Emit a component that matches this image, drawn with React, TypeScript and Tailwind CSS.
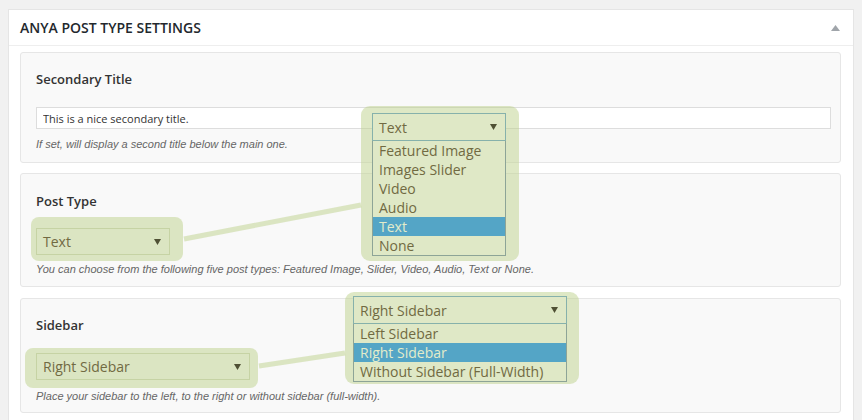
import React from "react";

const blob = "bg-[rgba(190,210,140,0.5)]";
const optText = "text-[#716a42]";

function Arrow({ className = "" }: { className?: string }) {
  return (
    <svg className={className} width="7" height="6" viewBox="0 0 7 6">
      <polygon points="0,0 7,0 3.5,6" fill="#4f5034" />
    </svg>
  );
}

function InlineSelect({
  value,
  width,
  blobClass,
}: {
  value: string;
  width: string;
  blobClass: string;
}) {
  return (
    <div className="relative inline-block">
      <div className={`absolute ${blobClass} ${blob} rounded-[8px]`} />
      <div
        className={`relative ${width} h-[27px] border border-[#c6d3a4] flex items-center justify-between pl-[6px] pr-[8px] text-[14px] ${optText}`}
      >
        <span>{value}</span>
        <Arrow />
      </div>
    </div>
  );
}

function Dropdown({
  className,
  headW,
  value,
  options,
  selected,
}: {
  className: string;
  headW: string;
  value: string;
  options: string[];
  selected: number;
}) {
  return (
    <div className={`absolute ${className} ${blob} rounded-[9px]`}>
      <div className={headW}>
        <div className="h-[28px] bg-[#dfe8c6] border border-[#86b1ab] flex items-center justify-between pl-[6px] pr-[8px] text-[14px]">
          <span className={optText}>{value}</span>
          <Arrow />
        </div>
        <div className="bg-[#dfe8c6] border-x border-b border-[#8da497]">
          {options.map((o, i) => (
            <div
              key={o}
              className={`h-[19px] leading-[20px] pl-[6px] text-[14px] whitespace-nowrap ${
                i === selected ? "bg-[#54a5c6] text-[#e3ecca]" : optText
              }`}
            >
              {o}
            </div>
          ))}
        </div>
      </div>
    </div>
  );
}

export default function App() {
  return (
    <div className="relative w-[862px] h-[420px] overflow-hidden bg-[#f1f1f1] font-['Open_Sans',sans-serif]">
      <div className="ml-[8px] mt-[9px] w-[846px] border border-[#e5e5e5] bg-white">
        <div className="h-[36px] border-b border-[#eeeeee] flex items-center justify-between pl-[11px] pr-[13px]">
          <h2 className="text-[14px] font-semibold text-[#23282d]">ANYA POST TYPE SETTINGS</h2>
          <svg width="9" height="6" viewBox="0 0 9 6">
            <polygon points="4.5,0 9,6 0,6" fill="#a0a5aa" />
          </svg>
        </div>

        <div className="pl-[11px] pr-[12px] pt-[6px] pb-[10px] flex flex-col">
          {/* Secondary title */}
          <div className="border border-[#e6e6e6] rounded-[3px] bg-[#f9f9f9] pl-[15px] pt-[17px] pb-[11px]">
            <div className="text-[13px] leading-[18px] font-semibold text-[#333]">Secondary Title</div>
            <input
              readOnly
              defaultValue="This is a nice secondary title."
              className="mt-[19px] w-[795px] h-[22px] border border-[#dddddd] bg-white pl-[6px] text-[11px] text-[#333] outline-none"
            />
            <p className="mt-[8px] text-[11px] leading-[14px] italic text-[#666] font-['Liberation_Sans',sans-serif]">
              If set, will display a second title below the main one.
            </p>
          </div>

          {/* Post type */}
          <div className="mt-[10px] border border-[#e6e6e6] rounded-[3px] bg-[#f9f9f9] pl-[15px] pt-[18px] pb-[10px]">
            <div className="text-[13px] leading-[18px] font-semibold text-[#333]">Post Type</div>
            <div className="mt-[18px] h-[27px]">
              <InlineSelect value="Text" width="w-[134px]" blobClass="-left-[5px] -right-[13px] -top-[11px] -bottom-[6px]" />
            </div>
            <p className="mt-[7px] text-[11px] leading-[14px] italic text-[#666] font-['Liberation_Sans',sans-serif]">
              You can choose from the following five post types: Featured Image, Slider, Video, Audio, Text or None.
            </p>
          </div>

          {/* Sidebar */}
          <div className="mt-[11px] border border-[#e6e6e6] rounded-[3px] bg-[#f9f9f9] pl-[15px] pt-[17px] pb-[9px]">
            <div className="text-[13px] leading-[18px] font-semibold text-[#333]">Sidebar</div>
            <div className="mt-[19px] h-[27px]">
              <InlineSelect value="Right Sidebar" width="w-[214px]" blobClass="-left-[11px] -right-[8px] -top-[5px] -bottom-[8px]" />
            </div>
            <p className="mt-[9px] text-[11px] leading-[14px] italic text-[#666] font-['Liberation_Sans',sans-serif]">
              Place your sidebar to the left, to the right or without sidebar (full-width).
            </p>
          </div>
        </div>
      </div>

      {/* connector lines */}
      <svg className="absolute left-0 top-0 pointer-events-none" width="862" height="420">
        <line x1="184" y1="239" x2="361" y2="205" stroke="rgba(190,210,140,0.5)" strokeWidth="5" />
        <line x1="259" y1="366" x2="345" y2="353" stroke="rgba(190,210,140,0.5)" strokeWidth="5" />
      </svg>

      <Dropdown
        className="left-[361px] top-[106px] w-[158px] h-[155px] pl-[11px] pt-[7px]"
        headW="w-[134px]"
        value="Text"
        options={["Featured Image", "Images Slider", "Video", "Audio", "Text", "None"]}
        selected={4}
      />
      <Dropdown
        className="left-[345px] top-[292px] w-[234px] h-[92px] pl-[8px] pt-[4px]"
        headW="w-[214px]"
        value="Right Sidebar"
        options={["Left Sidebar", "Right Sidebar", "Without Sidebar (Full-Width)"]}
        selected={1}
      />
    </div>
  );
}
